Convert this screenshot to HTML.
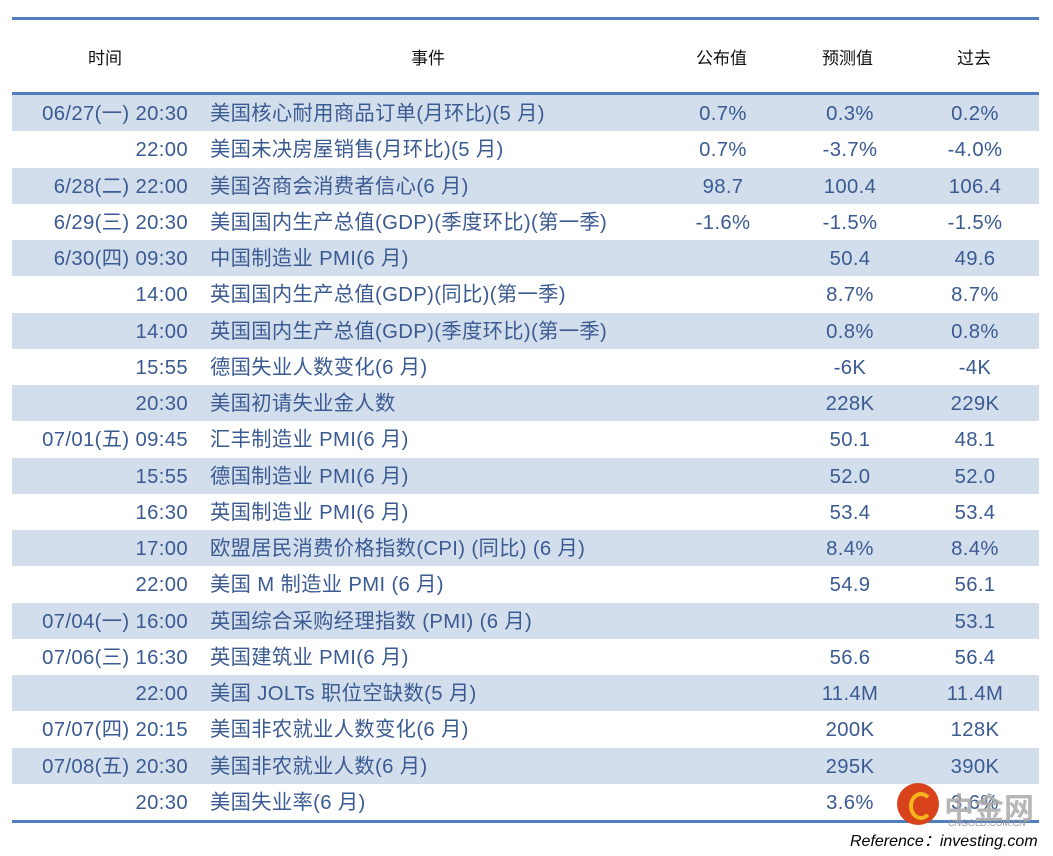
<!DOCTYPE html>
<html><head><meta charset="utf-8"><style>
body{margin:0;width:1053px;height:856px;background:#fff;position:relative;overflow:hidden;font-family:"Liberation Sans","Noto Sans CJK SC",sans-serif;}
.tl{position:absolute;left:12px;width:1027px;background:#4f7fbd;}
.hd{position:absolute;top:44px;font-size:17px;color:#111;}
.row{position:absolute;left:12px;width:1027px;height:36.25px;font-size:20.3px;letter-spacing:0.35px;color:#3a5a92;line-height:38px;}
.row.s{background:#d3deed;}
.row span{position:absolute;top:0;white-space:nowrap;}
.t{right:851px;text-align:right}
.e{left:198px}
.a{left:650px;width:122px;text-align:center}
.f{left:776px;width:124px;text-align:center}
.p{left:902px;width:122px;text-align:center}
</style></head><body>
<div class="tl" style="top:17px;height:3px"></div>
<div class="hd" style="left:88px">时间</div>
<div class="hd" style="left:411px">事件</div>
<div class="hd" style="left:696px">公布值</div>
<div class="hd" style="left:822px">预测值</div>
<div class="hd" style="left:957px">过去</div>
<div class="tl" style="top:92px;height:3px"></div>
<div class="row s" style="top:95px"><span class="t">06/27(一) 20:30</span><span class="e">美国核心耐用商品订单(月环比)(5 月)</span><span class="a">0.7%</span><span class="f">0.3%</span><span class="p">0.2%</span></div>
<div class="row" style="top:131.25px"><span class="t">22:00</span><span class="e">美国未决房屋销售(月环比)(5 月)</span><span class="a">0.7%</span><span class="f">-3.7%</span><span class="p">-4.0%</span></div>
<div class="row s" style="top:167.5px"><span class="t">6/28(二) 22:00</span><span class="e">美国咨商会消费者信心(6 月)</span><span class="a">98.7</span><span class="f">100.4</span><span class="p">106.4</span></div>
<div class="row" style="top:203.75px"><span class="t">6/29(三) 20:30</span><span class="e">美国国内生产总值(GDP)(季度环比)(第一季)</span><span class="a">-1.6%</span><span class="f">-1.5%</span><span class="p">-1.5%</span></div>
<div class="row s" style="top:240px"><span class="t">6/30(四) 09:30</span><span class="e">中国制造业 PMI(6 月)</span><span class="f">50.4</span><span class="p">49.6</span></div>
<div class="row" style="top:276.25px"><span class="t">14:00</span><span class="e">英国国内生产总值(GDP)(同比)(第一季)</span><span class="f">8.7%</span><span class="p">8.7%</span></div>
<div class="row s" style="top:312.5px"><span class="t">14:00</span><span class="e">英国国内生产总值(GDP)(季度环比)(第一季)</span><span class="f">0.8%</span><span class="p">0.8%</span></div>
<div class="row" style="top:348.75px"><span class="t">15:55</span><span class="e">德国失业人数变化(6 月)</span><span class="f">-6K</span><span class="p">-4K</span></div>
<div class="row s" style="top:385px"><span class="t">20:30</span><span class="e">美国初请失业金人数</span><span class="f">228K</span><span class="p">229K</span></div>
<div class="row" style="top:421.25px"><span class="t">07/01(五) 09:45</span><span class="e">汇丰制造业 PMI(6 月)</span><span class="f">50.1</span><span class="p">48.1</span></div>
<div class="row s" style="top:457.5px"><span class="t">15:55</span><span class="e">德国制造业 PMI(6 月)</span><span class="f">52.0</span><span class="p">52.0</span></div>
<div class="row" style="top:493.75px"><span class="t">16:30</span><span class="e">英国制造业 PMI(6 月)</span><span class="f">53.4</span><span class="p">53.4</span></div>
<div class="row s" style="top:530px"><span class="t">17:00</span><span class="e">欧盟居民消费价格指数(CPI) (同比) (6 月)</span><span class="f">8.4%</span><span class="p">8.4%</span></div>
<div class="row" style="top:566.25px"><span class="t">22:00</span><span class="e">美国 M 制造业 PMI (6 月)</span><span class="f">54.9</span><span class="p">56.1</span></div>
<div class="row s" style="top:602.5px"><span class="t">07/04(一) 16:00</span><span class="e">英国综合采购经理指数 (PMI) (6 月)</span><span class="p">53.1</span></div>
<div class="row" style="top:638.75px"><span class="t">07/06(三) 16:30</span><span class="e">英国建筑业 PMI(6 月)</span><span class="f">56.6</span><span class="p">56.4</span></div>
<div class="row s" style="top:675px"><span class="t">22:00</span><span class="e">美国 JOLTs 职位空缺数(5 月)</span><span class="f">11.4M</span><span class="p">11.4M</span></div>
<div class="row" style="top:711.25px"><span class="t">07/07(四) 20:15</span><span class="e">美国非农就业人数变化(6 月)</span><span class="f">200K</span><span class="p">128K</span></div>
<div class="row s" style="top:747.5px"><span class="t">07/08(五) 20:30</span><span class="e">美国非农就业人数(6 月)</span><span class="f">295K</span><span class="p">390K</span></div>
<div class="row" style="top:783.75px"><span class="t">20:30</span><span class="e">美国失业率(6 月)</span><span class="f">3.6%</span><span class="p">3.6%</span></div>
<div class="tl" style="top:820px;height:3px"></div>
<div style="position:absolute;left:897px;top:783px;width:42px;height:42px;border-radius:50%;background:#d9431c"></div>
<div style="position:absolute;left:909px;top:792px;width:16px;height:20px;border-radius:50%;border:4px solid #f5b51c;border-right-color:transparent"></div>
<div style="position:absolute;left:944px;top:784px;font-size:30px;font-weight:bold;color:#aaa;opacity:.85">中金网</div>
<div style="position:absolute;left:948px;top:818px;font-size:9px;color:#999">CNGOLD.COM.CN</div>
<div style="position:absolute;left:850px;top:827px;font-size:16px;font-style:italic;color:#000">Reference：investing.com</div>
</body></html>
